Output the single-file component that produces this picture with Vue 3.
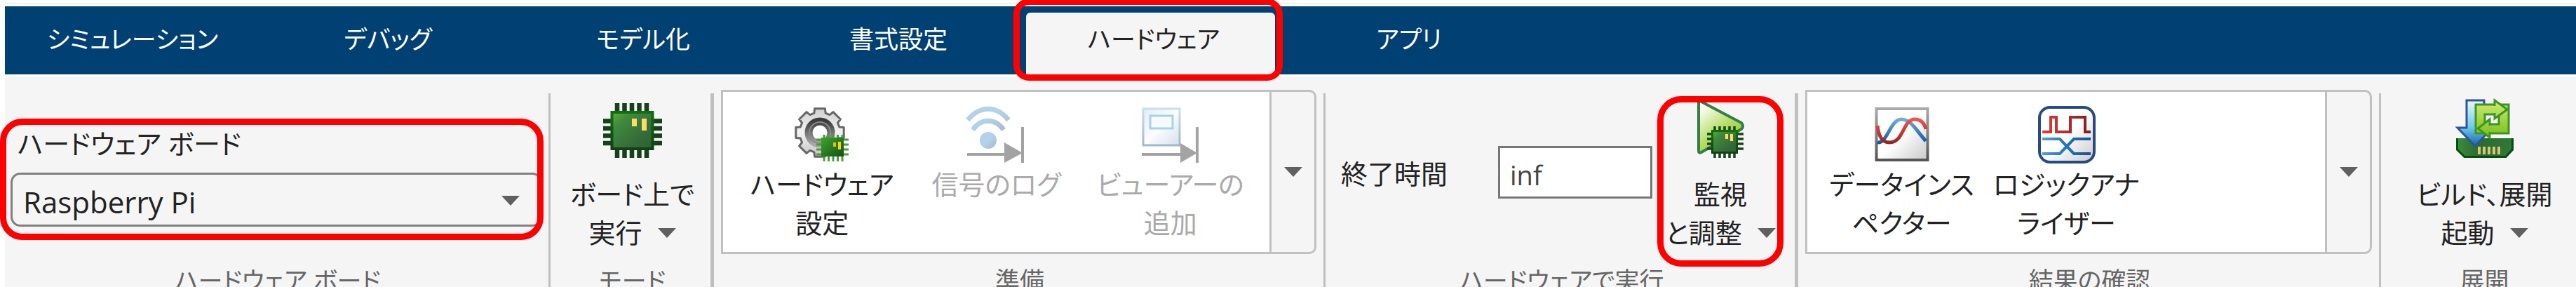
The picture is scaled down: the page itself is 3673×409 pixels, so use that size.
<script setup>
import { ref } from 'vue'

const tabs = ['シミュレーション', 'デバッグ', 'モデル化', '書式設定', 'ハードウェア', 'アプリ']
const active = ref('ハードウェア')
const board = ref('Raspberry Pi')
const stopTime = ref('inf')

function gearPath(cx, cy, inner, outer, teeth) {
  const step = (Math.PI * 2) / teeth
  const points = []
  for (let i = 0; i < teeth; i++) {
    const a = i * step - Math.PI / 2
    for (const [t, r] of [[-0.36, inner], [-0.27, outer], [0.27, outer], [0.36, inner]]) {
      const angle = a + t * step
      points.push(`${(cx + r * Math.cos(angle)).toFixed(1)} ${(cy + r * Math.sin(angle)).toFixed(1)}`)
    }
  }
  return `M${points.join('L')}Z`
}
const gear = gearPath(36, 36, 29, 35, 8)
</script>

<template>
  <div class="app">
    <svg class="defs" width="0" height="0" aria-hidden="true">
      <defs>
        <linearGradient id="chipFill" x1="0" y1="0" x2="1" y2="1">
          <stop offset="0" stop-color="#5fae33" />
          <stop offset="0.25" stop-color="#3f8a3d" />
          <stop offset="0.7" stop-color="#356b38" />
          <stop offset="1" stop-color="#2b6030" />
        </linearGradient>
        <linearGradient id="chipEdge" x1="0" y1="0" x2="0" y2="1">
          <stop offset="0" stop-color="#107010" />
          <stop offset="1" stop-color="#123f16" />
        </linearGradient>
        <linearGradient id="miniFill" x1="0" y1="0" x2="1" y2="1">
          <stop offset="0" stop-color="#3da52e" />
          <stop offset="1" stop-color="#164f14" />
        </linearGradient>
        <linearGradient id="gearFill" x1="0" y1="0" x2="0" y2="1">
          <stop offset="0" stop-color="#d0d0d0" />
          <stop offset="0.5" stop-color="#f2f2f2" />
          <stop offset="1" stop-color="#c4c4c4" />
        </linearGradient>
        <linearGradient id="ringFill" x1="0" y1="0" x2="0" y2="1">
          <stop offset="0" stop-color="#3c3c3c" />
          <stop offset="1" stop-color="#a8a8a8" />
        </linearGradient>
        <linearGradient id="paleBlue" x1="0" y1="0" x2="1" y2="1">
          <stop offset="0.5" stop-color="#b3d1e8" />
          <stop offset="1" stop-color="#a9b9cf" />
        </linearGradient>
        <linearGradient id="viewEdge" x1="0" y1="0" x2="0" y2="1">
          <stop offset="0" stop-color="#c9dfee" />
          <stop offset="1" stop-color="#a3b7cc" />
        </linearGradient>
        <linearGradient id="viewFill" x1="0" y1="0" x2="1" y2="1">
          <stop offset="0" stop-color="#e2edf6" />
          <stop offset="0.5" stop-color="#fbfcfe" />
          <stop offset="1" stop-color="#d5e0eb" />
        </linearGradient>
        <linearGradient id="playFill" x1="0" y1="0" x2="0.7" y2="1">
          <stop offset="0.1" stop-color="#ffffff" />
          <stop offset="0.6" stop-color="#b4dd62" />
          <stop offset="1" stop-color="#8cc63a" />
        </linearGradient>
        <linearGradient id="paper" x1="0" y1="0" x2="1" y2="1">
          <stop offset="0.5" stop-color="#ffffff" />
          <stop offset="1" stop-color="#c9c9c9" />
        </linearGradient>
        <linearGradient id="frame" x1="0" y1="0" x2="0" y2="1">
          <stop offset="0" stop-color="#aaaaaa" />
          <stop offset="1" stop-color="#555555" />
        </linearGradient>
        <linearGradient id="redWave" gradientUnits="userSpaceOnUse" x1="0" y1="16" x2="0" y2="52">
          <stop offset="0" stop-color="#f0574b" />
          <stop offset="1" stop-color="#96221f" />
        </linearGradient>
        <linearGradient id="blueWave" gradientUnits="userSpaceOnUse" x1="0" y1="16" x2="0" y2="52">
          <stop offset="0" stop-color="#6fb0e0" />
          <stop offset="1" stop-color="#0f5596" />
        </linearGradient>
        <linearGradient id="redPulse" gradientUnits="userSpaceOnUse" x1="6" y1="0" x2="76" y2="0">
          <stop offset="0" stop-color="#e03c36" />
          <stop offset="1" stop-color="#7d1f1f" />
        </linearGradient>
        <linearGradient id="bluePulse" gradientUnits="userSpaceOnUse" x1="6" y1="0" x2="76" y2="0">
          <stop offset="0" stop-color="#4f9fd6" />
          <stop offset="0.5" stop-color="#1f74b8" />
          <stop offset="1" stop-color="#1d4f94" />
        </linearGradient>
        <linearGradient id="downFill" x1="0" y1="0" x2="0" y2="1">
          <stop offset="0" stop-color="#edf8fc" />
          <stop offset="0.6" stop-color="#6ac9e6" />
          <stop offset="1" stop-color="#1c5fae" />
        </linearGradient>
        <linearGradient id="loopFill" gradientUnits="userSpaceOnUse" x1="0" y1="0" x2="0" y2="46">
          <stop offset="0" stop-color="#c8e86a" />
          <stop offset="1" stop-color="#7cc21c" />
        </linearGradient>
        <linearGradient id="trayFill" x1="0" y1="0" x2="1" y2="0">
          <stop offset="0" stop-color="#3a8f3c" />
          <stop offset="0.4" stop-color="#2c6a30" />
          <stop offset="1" stop-color="#2f7a35" />
        </linearGradient>
      </defs>
    </svg>

    <nav class="tabs" role="tablist">
      <button
        v-for="t in tabs"
        :key="t"
        class="tab"
        :class="{ active: t === active }"
        role="tab"
        type="button"
        :aria-selected="t === active"
        @click="active = t"
      >{{ t }}<span v-if="t === active" class="mark mark-tab"></span></button>
    </nav>

    <main class="ribbon">
      <section class="group">
        <div class="body board">
          <label class="board-label" for="board">ハードウェア ボード</label>
          <div class="select-wrap">
            <select id="board" v-model="board" class="select">
              <option>Raspberry Pi</option>
            </select>
            <svg class="caret select-caret" viewBox="0 0 26 14"><path d="M0 0H26L13 14Z" /></svg>
          </div>
          <span class="mark mark-board"></span>
        </div>
        <h2 class="title">ハードウェア ボード</h2>
      </section>

      <section class="group wide-rule">
        <div class="body centered">
          <button class="tool" type="button">
            <svg class="icon" viewBox="0 0 84 78">
              <path d="M20 0V78M30.500 0V78M41 0V78M51.500 0V78M62 0V78M0 25.500H84M0 36H84M0 46.500H84M0 57H84" stroke="#17401b" stroke-width="6.500" />
              <rect x="12.500" y="13" width="58" height="52" fill="url(#chipFill)" stroke="url(#chipEdge)" stroke-width="4" />
              <rect x="41" y="22" width="7" height="11" fill="#ffdc66" />
              <rect x="55" y="22" width="7" height="17" fill="#ffdc66" />
            </svg>
            <span class="text">ボード上で</span>
            <span class="text">実行<svg class="caret" viewBox="0 0 26 14"><path d="M0 0H26L13 14Z" /></svg></span>
          </button>
        </div>
        <h2 class="title">モード</h2>
      </section>

      <section class="group">
        <div class="body">
          <div class="gallery">
            <div class="items">
              <button class="item" type="button">
                <svg class="icon" viewBox="0 0 78 78">
                  <path :d="gear" fill="url(#gearFill)" stroke="#666" stroke-width="3" stroke-linejoin="round" />
                  <circle cx="36" cy="36" r="16" fill="none" stroke="url(#ringFill)" stroke-width="11" />
                  <circle cx="36" cy="36" r="15" fill="none" stroke="#8a8a8a" stroke-width="2" />
                  <circle cx="36" cy="36" r="10" fill="#fff" />
                  <path d="M42 39V77M48.500 39V77M55 39V77M61.500 39V77M68 39V77M31 46H77M31 53H77M31 60H77M31 67H77" stroke="#4c9a3c" stroke-width="3" />
                  <rect x="38" y="43" width="32" height="27" fill="url(#miniFill)" />
                  <rect x="55" y="50" width="4" height="6" fill="#e0c400" />
                  <rect x="62" y="49" width="4" height="11" fill="#ffd400" />
                </svg>
                <span class="text">ハードウェア</span>
                <span class="text">設定</span>
              </button>
              <button class="item" type="button" disabled>
                <svg class="icon" viewBox="0 0 82 78">
                  <path d="M1 18C18 -3 42 -3 59 18M8 32C20 15 40 15 52 32" fill="none" stroke="url(#paleBlue)" stroke-width="7" />
                  <circle cx="30" cy="47" r="12" fill="url(#paleBlue)" />
                  <path d="M0 67H54M79 28V79" stroke="#a3a3a3" stroke-width="4" />
                  <path d="M53 50L79 65L53 79Z" fill="#a3a3a3" />
                </svg>
                <span class="text">信号のログ</span>
              </button>
              <button class="item" type="button" disabled>
                <svg class="icon" viewBox="0 0 82 78">
                  <rect x="2" y="2" width="52" height="52" fill="url(#viewFill)" stroke="url(#viewEdge)" stroke-width="3" />
                  <rect x="12" y="12" width="32" height="18" fill="#f7fafc" stroke="#a6d1ea" stroke-width="3" />
                  <path d="M0 67H56M79 28V79" stroke="#a3a3a3" stroke-width="4" />
                  <path d="M55 51L79 65L55 79Z" fill="#a3a3a3" />
                </svg>
                <span class="text">ビューアーの</span>
                <span class="text">追加</span>
              </button>
            </div>
            <button class="more" type="button" aria-label="準備">
              <svg class="caret" viewBox="0 0 26 14"><path d="M0 0H26L13 14Z" /></svg>
            </button>
          </div>
        </div>
        <h2 class="title">準備</h2>
      </section>

      <section class="group wide-rule">
        <div class="body run">
          <label class="stop-label" for="stop">終了時間</label>
          <input id="stop" v-model="stopTime" class="stop" type="text" />
          <button class="tool monitor" type="button">
            <svg class="icon" viewBox="0 0 78 78">
              <path d="M10 -3L69 28Q73 33 69 37L12 70Q8 72 8 68V-3Z" fill="url(#playFill)" stroke="#347f45" stroke-width="4" />
              <path d="M31 33V78M38 33V78M45 33V78M52 33V78M59 33V78M20 44H72M20 51H72M20 58H72M20 65H72" stroke="#1a421d" stroke-width="3.500" />
              <rect x="27.500" y="39.500" width="35" height="31" fill="url(#chipFill)" stroke="url(#chipEdge)" stroke-width="3" />
              <rect x="46" y="44" width="4" height="7" fill="#ffdc66" />
              <rect x="53" y="44" width="4" height="10" fill="#ffdc66" />
            </svg>
            <span class="text">監視</span>
            <span class="text">と調整<svg class="caret" viewBox="0 0 26 14"><path d="M0 0H26L13 14Z" /></svg></span>
            <span class="mark mark-monitor"></span>
          </button>
        </div>
        <h2 class="title">ハードウェアで実行</h2>
      </section>

      <section class="group">
        <div class="body">
          <div class="gallery">
            <div class="items results">
              <button class="item" type="button">
                <svg class="icon" viewBox="0 0 78 78">
                  <rect x="2.500" y="2" width="73" height="73" fill="url(#paper)" stroke="url(#frame)" stroke-width="4" />
                  <path d="M4 50C18 52 22 17 38 17C52 17 60 34 73 48" fill="none" stroke="url(#blueWave)" stroke-width="5" />
                  <path d="M4 26C6 44 12 50 21 50C42 50 40 17 57 17C66 17 71 23 73 31" fill="none" stroke="url(#redWave)" stroke-width="5" />
                </svg>
                <span class="text">データインス</span>
                <span class="text">ペクター</span>
              </button>
              <button class="item" type="button">
                <svg class="icon" viewBox="0 2 82 78">
                  <rect x="2" y="2" width="78" height="78" rx="15" fill="url(#paper)" stroke="#264a86" stroke-width="4" />
                  <path d="M6 37H18V16H26V37H46V16H67V37H75" fill="none" stroke="url(#redPulse)" stroke-width="4" />
                  <path d="M6 47H31L51 68H75M6 68H31L51 47H75" fill="none" stroke="url(#bluePulse)" stroke-width="4" />
                </svg>
                <span class="text">ロジックアナ</span>
                <span class="text">ライザー</span>
              </button>
            </div>
            <button class="more" type="button" aria-label="結果の確認">
              <svg class="caret" viewBox="0 0 26 14"><path d="M0 0H26L13 14Z" /></svg>
            </button>
          </div>
        </div>
        <h2 class="title">結果の確認</h2>
      </section>

      <section class="group deploy">
        <div class="body centered">
          <button class="tool" type="button">
            <svg class="icon" viewBox="0 0 82 78">
              <path d="M0 50H82V67L71 78H12L0 67Z" fill="url(#trayFill)" />
              <path d="M1.500 50V66L12 76.500H71L80.500 66V50" fill="none" stroke="#0c4a16" stroke-width="3" />
              <path d="M33 62V73M40 62V73M47 62V73M54 62V73M61 62V73" stroke="#d8c678" stroke-width="4" />
              <path d="M15 -4H40V35H52L27 61L2 35H15Z" fill="url(#downFill)" stroke="#2a559f" stroke-width="3" />
              <rect x="34" y="9" width="34" height="28" fill="#f5f5f5" />
              <g fill="url(#loopFill)" stroke="#3d9428" stroke-width="3">
                <path d="M28 2H75V43H28ZM41 16V30H61V16Z" fill-rule="evenodd" />
                <path d="M55 -4L73 9L55 22Z" />
                <path d="M48 23L31 36L48 49Z" />
              </g>
              <path d="M52 4H58V14H52ZM45 32H51V41H45Z" fill="url(#loopFill)" />
            </svg>
            <span class="text">ビルド、展開</span>
            <span class="text">起動<svg class="caret" viewBox="0 0 26 14"><path d="M0 0H26L13 14Z" /></svg></span>
          </button>
        </div>
        <h2 class="title">展開</h2>
      </section>
    </main>
  </div>
</template>

<style>
body {
  margin: 0;
  background: #fff;
}
</style>

<style scoped>
.app {
  box-sizing: border-box;
  height: 100vh;
  padding: 4px 0 0 7px;
  overflow: hidden;
  display: flex;
  flex-direction: column;
  font-family: "Open Sans", "Noto Sans CJK JP", sans-serif;
  font-feature-settings: "palt";
  font-size: 38px;
  line-height: 55px;
  color: #222;
}
.defs {
  position: absolute;
}
button,
input,
select {
  margin: 0;
  padding: 0;
  border: 0;
  background: none;
  color: inherit;
  font: inherit;
  font-feature-settings: inherit;
}
.tabs {
  display: flex;
  align-items: flex-end;
  height: 97px;
  border-top: 2px solid #f0f0f0;
  box-shadow: inset 0 3px #fff;
  padding-top: 3px;
  background: #014072;
  flex: none;
}
.tab {
  width: 364px;
  height: 88px;
  padding-bottom: 14px;
  color: #fff;
  font-size: 35px;
  line-height: 55px;
  white-space: nowrap;
}
.tab.active {
  position: relative;
  width: 355px;
  margin-right: 9px;
  padding-left: 9px;
  border-radius: 6px 6px 0 0;
  background: #f5f5f5;
  color: #222;
}
.mark {
  position: absolute;
  z-index: 2;
  box-sizing: border-box;
  border: 9px solid #f00;
  pointer-events: none;
}
.mark-tab {
  inset: -20px -11px -9px -18px;
  border-radius: 22px;
}
.mark-board {
  inset: 41px 10px 0 -7px;
  height: 173px;
  border-radius: 32px;
}
.mark-monitor {
  inset: 9px 0 auto;
  height: 243px;
  border-radius: 34px;
}
.ribbon {
  flex: 1;
  display: grid;
  grid-template-columns: 778fr 233fr 872fr 674fr 831fr 278fr;
  padding-top: 19px;
  border-top: 3px solid #fff;
  background: #f5f5f5;
}
.group {
  position: relative;
  min-width: 0;
}
.group::after {
  content: "";
  position: absolute;
  top: 5px;
  right: 0;
  bottom: 0;
  width: 3px;
  background: #c0c0c0;
}
.wide-rule::after {
  width: 5px;
}
.deploy::after {
  content: none;
}
.body {
  position: relative;
  height: 252px;
}
.title {
  margin: 0;
  font-size: 35px;
  font-weight: 400;
  line-height: 40px;
  text-align: center;
  white-space: nowrap;
  color: #666;
}
.board {
  box-sizing: border-box;
  padding: 49px 12px 0 8px;
}
.board-label {
  display: block;
  padding-left: 10px;
}
.select-wrap {
  position: relative;
  margin-top: 14px;
}
.select {
  appearance: none;
  box-sizing: border-box;
  width: 100%;
  height: 77px;
  padding: 6px 60px 0 15px;
  border: 3px solid #808080;
  border-radius: 14px;
  font-size: 42px;
}
.caret {
  width: 26px;
  height: 14px;
  fill: #606060;
}
.select-caret {
  position: absolute;
  top: 33px;
  right: 32px;
}
.centered {
  display: flex;
  justify-content: center;
}
.tool,
.item {
  position: relative;
  display: flex;
  flex-direction: column;
  align-items: center;
  justify-content: flex-start;
  white-space: nowrap;
}
.tool {
  padding-top: 19px;
}
.icon {
  height: 78px;
  overflow: visible;
}
.tool .icon {
  margin-bottom: 24px;
}
.text {
  display: flex;
  align-items: center;
  gap: 22px;
}
.gallery {
  display: flex;
  box-sizing: border-box;
  height: 234px;
  margin: 0 13px 0 10px;
  border: 3px solid #c0c0c0;
  border-radius: 0 10px 10px 0;
}
.items {
  flex: 1;
  display: flex;
  padding: 22px 17px 0;
  background: #fff;
}
.item {
  flex: 1;
}
.item .icon {
  margin-bottom: 4px;
}
.results .item {
  flex: 0 0 235px;
}
.item:disabled {
  color: #aaa;
}
.more {
  display: flex;
  align-items: center;
  justify-content: center;
  width: 64px;
  border-left: 3px solid #c0c0c0;
}
.run {
  display: flex;
  align-items: flex-start;
  padding-left: 22px;
}
.stop-label {
  width: 224px;
  padding-top: 92px;
  white-space: nowrap;
}
.stop {
  box-sizing: border-box;
  width: 220px;
  height: 75px;
  margin: 80px 7px 0 0;
  padding: 6px 0 0 14px;
  border: 3px solid #777;
  background: #fff;
  color: #444;
}
.monitor {
  width: 180px;
}
.deploy {
  padding-left: 17px;
}
</style>
